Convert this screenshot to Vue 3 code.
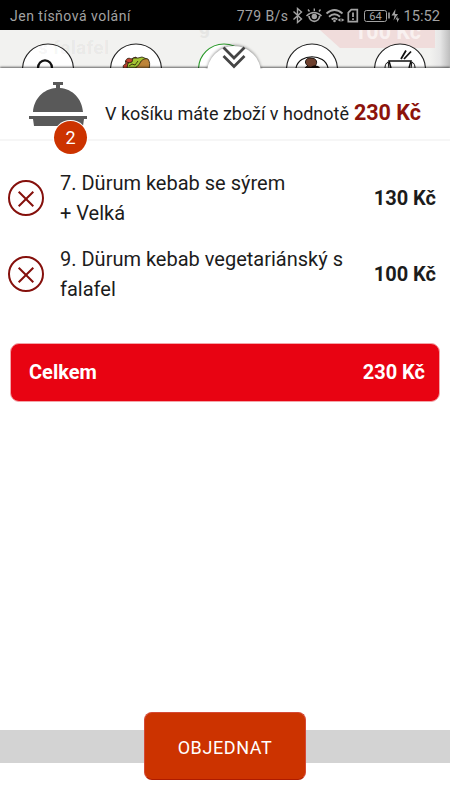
<template>
  <div class="screen">
    <header class="status">
      <span class="carrier">Jen tísňová volání</span>
      <span class="speed">779 B/s</span>
      <svg class="status-icons" width="110" height="18" viewBox="0 0 110 18">
        <g fill="none" stroke="#a3a3a3" stroke-width="1.4">
          <path d="M2.500 4.500l8 7.500-4 3.500v-14l4 3.500-8 7.500" stroke-width="1.4" />
          <path d="M15.500 9q7.500-7 15 0" stroke-width="1.600" />
          <path d="M18 9a5.300 5.300 0 0 0 10.600 0" stroke-width="1.700" />
          <path d="M18.500 4.500l-1.500-2M23.300 4V1.500M28 4.500l1.500-2" />
          <path d="M35.500 6.500q8-7 16 0M38 9.700q5.500-4.800 11 0M40.700 12.500q2.800-2.500 5.600 0" stroke-width="1.8" />
          <path d="M57.300 14.700v-9l3-3h6v12z" stroke-width="1.7" />
          <path d="M62 5.500v4.500M62 11.300v1.700" stroke-width="1.8" />
          <rect x="73.500" y="3.500" width="22" height="11" rx="2" stroke-width="1" />
          <path d="M98 5.500v6" stroke-width="1.6" />
        </g>
        <g fill="#a3a3a3">
          <circle cx="23.300" cy="9.500" r="2.700" />
          <circle cx="43.500" cy="14" r="1.300" />
          <path d="M46.500 13l3-1.700v3.400zM53.500 13l-3-1.700v3.400zM104.500 2l-4 6.500h3l-1 5 4.500-6.500h-3zM106.500 9l-2 3.500h1.500v3l2.500-4h-2z" />
          <text x="84.500" y="13" text-anchor="middle" class="battery-text">64</text>
        </g>
      </svg>
      <span class="clock">15:52</span>
    </header>

    <section class="backdrop">
      <div class="ghost">
        <svg class="ribbon" width="120" height="18" viewBox="0 0 120 18">
          <path d="M0 0h115v18H20z" fill="#f0dcdb" />
        </svg>
        <span class="ghost-letter">g</span>
        <span class="ghost-price">100 Kč</span>
      </div>
      <div class="categories">
        <svg v-for="name in categories" :key="name" class="category" viewBox="0 0 54 26">
          <circle cx="27" cy="27.500" r="25.500" fill="#fff" :stroke="name === 'active' ? '#299a29' : '#222'" stroke-width="1.100" />
          <path v-if="name === 'pizza'" d="M17 27c-.5-11.500 14.500-11.500 14 0" fill="none" stroke="#111" stroke-width="2.200" />
          <g v-if="name === 'kebab'" stroke="#251a08" stroke-width=".8">
            <path d="M15 27c-2-3 0-5 2-5-2-5 3-7 5-5l5-2 2 4-5 8z" fill="#c44232" />
            <path d="M18 26l1-5 4-1 1-4 5 0 4-1 5 2-3 9z" fill="#a3c532" />
            <path d="M26 27c1-3 4-3 5-6s5-5 8-4c2 3 2 6 1 10z" fill="#bd8438" />
            <path d="M20 24l3-2 3 1 3-4M16 19l4 2" fill="none" />
          </g>
          <g v-if="name === 'meat'">
            <path d="M11 26c3-15 29-15 32 0" fill="none" stroke="#111" stroke-width="1.200" />
            <path d="M20 26c1-2 3-2 3-2-5-3-2-9 3-8 6 0 7 5 4 8l4 3z" fill="#6d402e" stroke="#110b08" stroke-width=".9" />
            <path d="M20 26c2-1.500 4-2 6-1 3-2 7-2 9 1z" fill="#160c08" />
          </g>
          <g v-if="name === 'box'" fill="none" stroke="#111" stroke-width="1.500">
            <path d="M18 26l-2-7h22l-2 7M16 19v3M38 19v3" />
            <path d="M28 17l5-8.500M31 17l7-7.500" stroke-width="1.800" />
            <path d="M12 26c0-3 1-5 3-6l1 6M42 26c0-3-1-5-3-6l-1 6" stroke-width="1" />
          </g>
        </svg>
      </div>
      <span class="ghost-name">s falafel</span>
      <div class="handle">
        <svg width="24" height="24" viewBox="0 0 24 24">
          <path d="M1.500 1.500L12 12 22.500 1.500M1.500 10L12 20.500 22.500 10" fill="none" stroke="#454545" stroke-width="2.700" />
        </svg>
      </div>
    </section>

    <main class="sheet">
      <div class="summary">
        <div class="cloche">
          <svg width="58" height="46" viewBox="0 0 58 46" fill="#595959">
            <path d="M24 0h10v3h-3v3c13 1 22 11 23 24H4C5 17 14 7 27 6V3h-3zM0 34h58v3h-3l-1 7H5l-1-7H0z" />
          </svg>
          <span class="badge">{{ items.length }}</span>
        </div>
        <span class="summary-text">V košíku máte zboží v hodnotě</span>
        <strong class="summary-price">230 Kč</strong>
      </div>

      <ul class="items">
        <li v-for="item in items" :key="item.name" class="item">
          <svg class="remove" width="38" height="38" viewBox="0 0 38 38">
            <circle cx="19" cy="19" r="17" />
            <path d="M11.700 12.700l14.600 14.600M26.300 12.700L11.700 27.300" />
          </svg>
          <div class="item-name">
            {{ item.name }}<br />{{ item.detail }}
          </div>
          <strong class="item-price">{{ item.price }}</strong>
        </li>
      </ul>

      <div class="total">
        <span>Celkem</span>
        <span>230 Kč</span>
      </div>
    </main>

    <footer class="footer">
      <div class="strip">
        <button class="order">OBJEDNAT</button>
      </div>
    </footer>
  </div>
</template>

<script setup>
import { ref } from "vue";

const categories = ["pizza", "kebab", "active", "meat", "box"];

const items = ref([
  { name: "7. Dürum kebab se sýrem", detail: "+ Velká", price: "130 Kč" },
  { name: "9. Dürum kebab vegetariánský s", detail: "falafel", price: "100 Kč" }
]);
</script>

<style>
body {
  margin: 0;
  background: #fff;
}
</style>

<style scoped>
.screen {
  width: 450px;
  height: 800px;
  display: flex;
  flex-direction: column;
  overflow: hidden;
  font-family: Roboto, "Noto Sans", sans-serif;
  color: #1c1c1c;
  background: #fff;
}

.status {
  flex: none;
  height: 30px;
  box-sizing: border-box;
  padding: 2px 10px 0;
  display: flex;
  align-items: center;
  background: #000;
  color: #a3a3a3;
  font-size: 14px;
}

.carrier {
  letter-spacing: 0.5px;
}

.speed {
  margin-left: auto;
  letter-spacing: 0.4px;
}

.status-icons {
  margin: 0 2px 0 3px;
}

.battery-text {
  font-size: 11px;
}

.clock {
  font-size: 14.7px;
}

.backdrop {
  position: relative;
  flex: none;
  height: 38px;
  background: linear-gradient(to right, #f2f2f0 430px, #e6e6e6 440px, #bdbdbd);
}

/* obsah stránky prosvítající pod košíkem */
.ghost {
  position: absolute;
  inset: 0;
  overflow: hidden;
}

.ghost-name,
.ghost-letter,
.ghost-price,
.ribbon {
  position: absolute;
}

.ghost-name {
  left: 38px;
  top: 6px;
  font-size: 19px;
  font-weight: 700;
  letter-spacing: 0.3px;
  color: rgba(0, 0, 0, 0.055);
}

.ghost-letter {
  left: 199px;
  top: -14px;
  font-size: 19px;
  font-weight: 700;
  color: #e6e6e4;
}

.ribbon {
  left: 320px;
  top: 0;
}

.ghost-price {
  left: 354px;
  top: -10px;
  font-size: 21.5px;
  font-weight: 700;
  line-height: 24px;
  color: #f9f1f0;
}

.categories {
  position: relative;
  display: flex;
  gap: 34px;
  padding: 12px 0 0 21px;
}

.category {
  width: 54px;
  height: 26px;
}

.handle {
  position: absolute;
  z-index: 2;
  left: 207px;
  top: 16px;
  width: 54px;
  height: 40px;
  display: flex;
  justify-content: center;
  border-radius: 27px 27px 0 0;
  background: #fff;
  box-shadow: 0 -1px 3px rgba(0, 0, 0, 0.4);
  clip-path: inset(-6px -2px 17px -4px);
}

.sheet {
  position: relative;
  flex: 1;
  background: #fff;
  box-shadow: 0 -1px 2px rgba(0, 0, 0, 0.6);
}

.summary {
  height: 73px;
  box-sizing: border-box;
  padding: 14px 29px 0;
  display: flex;
  align-items: flex-start;
  border-bottom: 2px solid #f6f6f6;
}

.cloche {
  position: relative;
  width: 58px;
  height: 46px;
}

.badge {
  position: absolute;
  left: 25px;
  top: 39px;
  width: 33px;
  height: 33px;
  border-radius: 50%;
  background: #cc3300;
  box-shadow: 0 0 0 1px #fff;
  color: #fff;
  font-size: 18px;
  line-height: 33px;
  text-align: center;
}

.summary-text {
  margin-left: 18px;
  padding-top: 20px;
  font-size: 18px;
  line-height: 24px;
  letter-spacing: -0.01px;
  white-space: nowrap;
}

.summary-price {
  margin-left: 5px;
  padding-top: 18px;
  font-size: 21.5px;
  line-height: 26px;
  white-space: nowrap;
  color: #8d130b;
}

.items {
  margin: 0;
  padding: 27px 14px 0 7px;
  list-style: none;
  display: flex;
  flex-direction: column;
  gap: 16px;
}

.item {
  height: 60px;
  display: flex;
  align-items: center;
}

.remove {
  flex: none;
  fill: none;
  stroke: #85100c;
  stroke-width: 2;
}

.item-name {
  flex: 1;
  margin-left: 15px;
  font-size: 20px;
  line-height: 30px;
  white-space: nowrap;
}

.item-price {
  font-size: 20px;
}

.total {
  height: 59px;
  box-sizing: border-box;
  margin: 39px 10px 0;
  padding: 0 14px 1px 18px;
  display: flex;
  align-items: center;
  justify-content: space-between;
  border: 1px solid #f3a5a9;
  border-radius: 9px;
  background: #e80312;
  color: #fff;
  font-size: 20px;
  font-weight: 700;
}

.footer {
  position: relative;
  flex: none;
  height: 88px;
  background: #fff;
}

.strip {
  width: 100%;
  height: 33px;
  margin-top: 18px;
  display: flex;
  align-items: center;
  justify-content: center;
  background: #d3d3d3;
}

.footer::before {
  content: "";
  display: table;
}

.order {
  flex: none;
  width: 162px;
  height: 68px;
  margin-top: -1px;
  padding-top: 3px;
  border: 1px solid #d54a36;
  border-bottom-color: #ae1b00;
  border-radius: 8px;
  background: #cc3300;
  color: #fff;
  font-family: inherit;
  font-size: 18px;
  letter-spacing: 0.6px;
}
</style>
